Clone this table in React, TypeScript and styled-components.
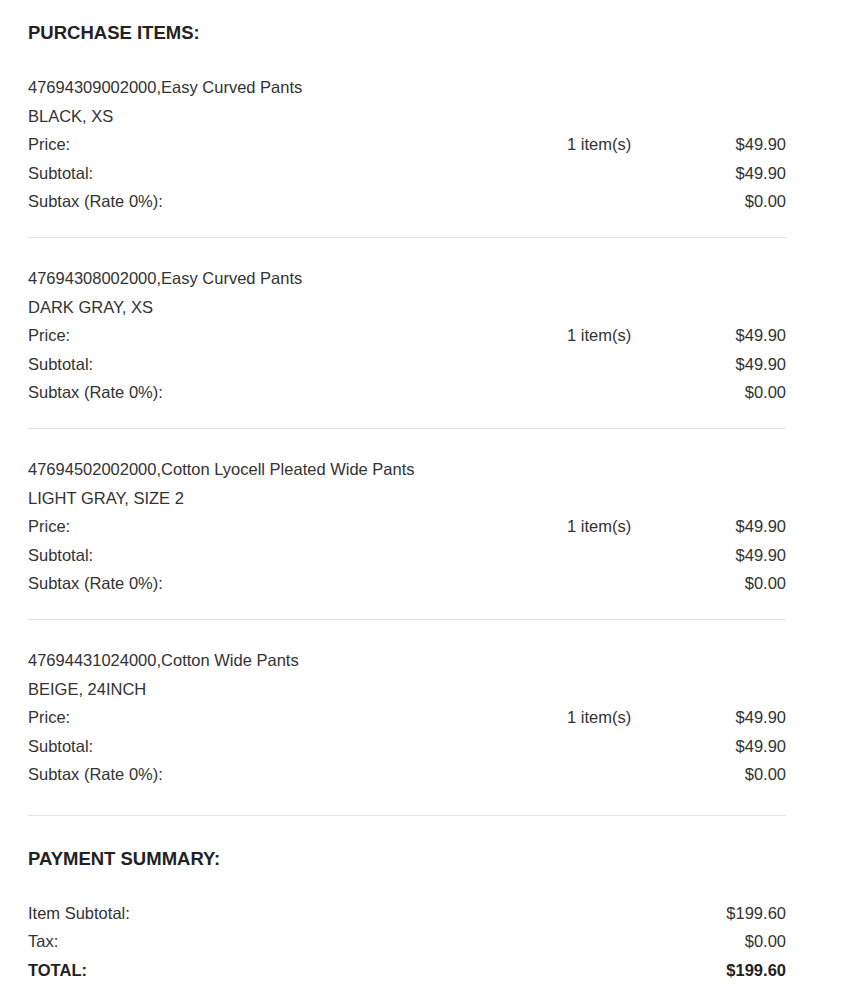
import React from 'react';
import styled, { createGlobalStyle } from 'styled-components';

const GlobalStyle = createGlobalStyle`
  body {
    margin: 0;
    background: #ffffff;
    font-family: "Liberation Sans", Arial, Helvetica, sans-serif;
    color: #333333;
  }
`;

const Page = styled.div`
  width: 758px;
  padding: 19px 0 0 28px;
`;

const SectionTitle = styled.h2<{ $gap: number }>`
  margin: 0 0 ${({ $gap }) => $gap}px;
  font-size: 18.5px;
  line-height: 28px;
  font-weight: 700;
  color: #222222;
`;

const Item = styled.div`
  padding-bottom: 21px;
  margin-bottom: 26.5px;
  border-bottom: 1px solid #e4e4e4;

  &:last-child {
    padding-bottom: 26px;
    margin-bottom: 29px;
  }
`;

const Line = styled.div`
  font-size: 16.5px;
  line-height: 28.5px;
  white-space: nowrap;
`;

const Row = styled.div<{ $bold?: boolean }>`
  display: grid;
  grid-template-columns: 1fr 119px 100px;
  font-size: 16.5px;
  line-height: 28.5px;
  font-weight: ${({ $bold }) => ($bold ? 700 : 400)};
  color: ${({ $bold }) => ($bold ? '#222222' : '#333333')};
`;

const Qty = styled.span``;

const Value = styled.span`
  text-align: right;
`;

interface PurchaseItem {
  sku: string;
  name: string;
  variant: string;
  qty: number;
  price: string;
  subtotal: string;
  subtax: string;
}

const items: PurchaseItem[] = [
  { sku: '47694309002000', name: 'Easy Curved Pants', variant: 'BLACK, XS', qty: 1, price: '$49.90', subtotal: '$49.90', subtax: '$0.00' },
  { sku: '47694308002000', name: 'Easy Curved Pants', variant: 'DARK GRAY, XS', qty: 1, price: '$49.90', subtotal: '$49.90', subtax: '$0.00' },
  { sku: '47694502002000', name: 'Cotton Lyocell Pleated Wide Pants', variant: 'LIGHT GRAY, SIZE 2', qty: 1, price: '$49.90', subtotal: '$49.90', subtax: '$0.00' },
  { sku: '47694431024000', name: 'Cotton Wide Pants', variant: 'BEIGE, 24INCH', qty: 1, price: '$49.90', subtotal: '$49.90', subtax: '$0.00' },
];

const App = () => {
  return (
    <>
      <GlobalStyle />
      <Page>
        <SectionTitle $gap={26}>PURCHASE ITEMS:</SectionTitle>
        <div>
          {items.map((item) => (
            <Item key={item.sku}>
              <Line>{item.sku},{item.name}</Line>
              <Line>{item.variant}</Line>
              <Row>
                <span>Price:</span>
                <Qty>{item.qty} item(s)</Qty>
                <Value>{item.price}</Value>
              </Row>
              <Row>
                <span>Subtotal:</span>
                <Qty />
                <Value>{item.subtotal}</Value>
              </Row>
              <Row>
                <span>Subtax (Rate 0%):</span>
                <Qty />
                <Value>{item.subtax}</Value>
              </Row>
            </Item>
          ))}
        </div>

        <SectionTitle $gap={26}>PAYMENT SUMMARY:</SectionTitle>
        <Row>
          <span>Item Subtotal:</span>
          <Qty />
          <Value>$199.60</Value>
        </Row>
        <Row>
          <span>Tax:</span>
          <Qty />
          <Value>$0.00</Value>
        </Row>
        <Row $bold>
          <span>TOTAL:</span>
          <Qty />
          <Value>$199.60</Value>
        </Row>
      </Page>
    </>
  );
};

export default App;
